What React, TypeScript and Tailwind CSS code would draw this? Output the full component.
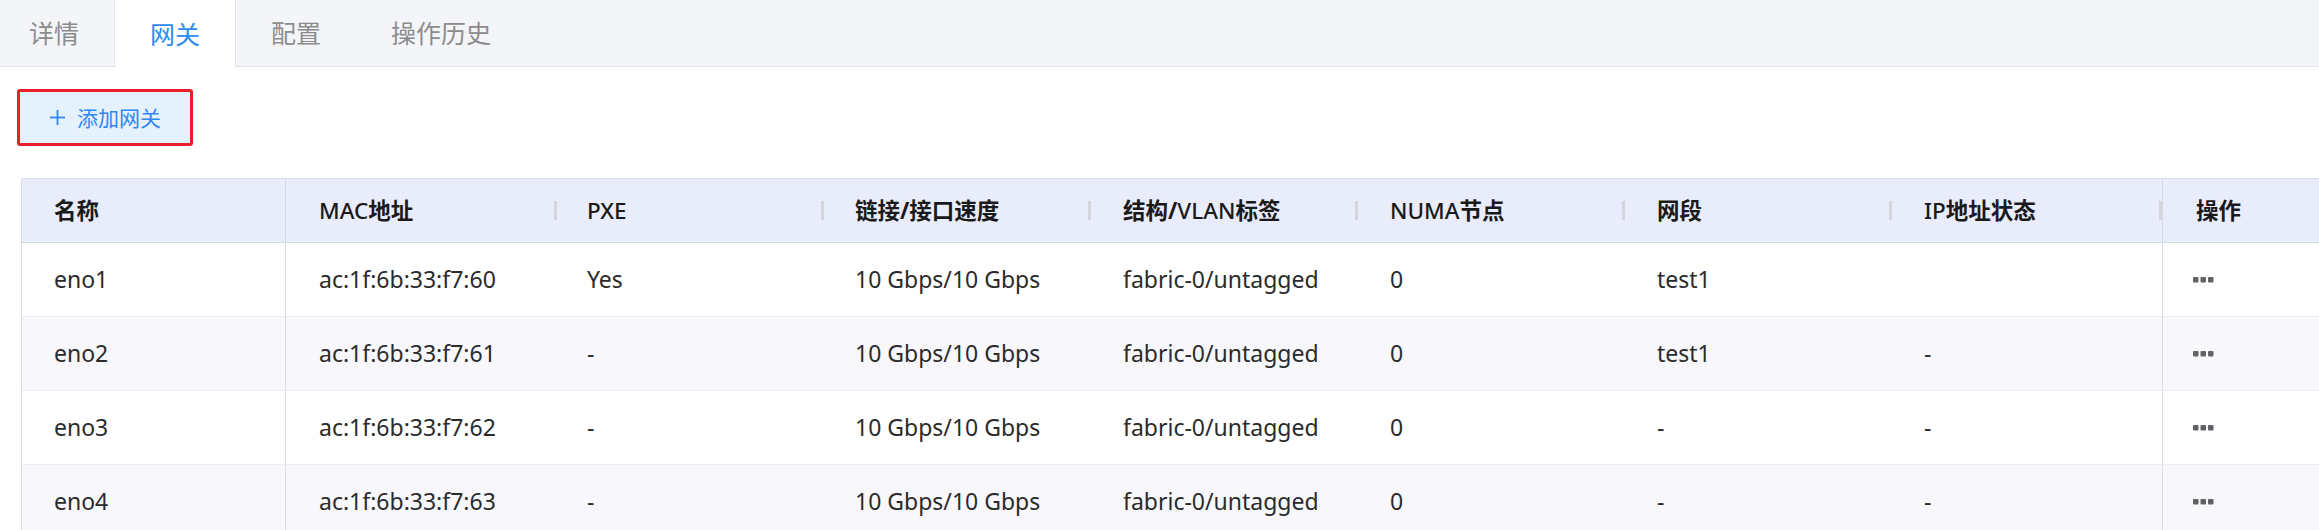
import React from "react";

const FONT = { fontFamily: '"Noto Sans", "Noto Sans CJK SC", sans-serif' };

type Row = string[];

const rows: Row[] = [
  ["eno1", "ac:1f:6b:33:f7:60", "Yes", "10 Gbps/10 Gbps", "fabric-0/untagged", "0", "test1", ""],
  ["eno2", "ac:1f:6b:33:f7:61", "-", "10 Gbps/10 Gbps", "fabric-0/untagged", "0", "test1", "-"],
  ["eno3", "ac:1f:6b:33:f7:62", "-", "10 Gbps/10 Gbps", "fabric-0/untagged", "0", "-", "-"],
  ["eno4", "ac:1f:6b:33:f7:63", "-", "10 Gbps/10 Gbps", "fabric-0/untagged", "0", "-", "-"],
];

const headers = ["MAC地址", "PXE", "链接/接口速度", "结构/VLAN标签", "NUMA节点", "网段", "IP地址状态"];
const widths = ["w-[271px]", "w-[267px]", "w-[267px]", "w-[267px]", "w-[267px]", "w-[267px]", "w-[270px]"];
const pads = ["pl-[33px]", "pl-[30px]", "pl-[31px]", "pl-[32px]", "pl-[32px]", "pl-[32px]", "pl-[32px]"];

function Label({ text }: { text: string }) {
  const parts = text.split(/([\u4e00-\u9fff/]+)/).filter((p) => p.length > 0);
  return (
    <span>
      {parts.map((p, i) =>
        /[\u4e00-\u9fff/]/.test(p) ? (
          <span key={i} className="font-bold">
            {p}
          </span>
        ) : (
          <span key={i} className="font-medium">
            {p}
          </span>
        )
      )}
    </span>
  );
}

function Dots() {
  return (
    <svg width="21" height="6" viewBox="0 0 21 6">
      <rect x="0" y="0" width="5.5" height="5.5" rx="1" fill="#5f6266" />
      <rect x="7.5" y="0" width="5.5" height="5.5" rx="1" fill="#5f6266" />
      <rect x="15" y="0" width="5.5" height="5.5" rx="1" fill="#5f6266" />
    </svg>
  );
}

export default function App() {
  return (
    <div className="w-[2319px] h-[530px] overflow-hidden bg-white" style={FONT}>
      {/* Tabs */}
      <div className="flex h-[67px] bg-[#f4f5f9] text-[25px]" style={{ fontFamily: '"Noto Sans CJK SC", sans-serif' }}>
        <div className="w-[115px] flex items-center pl-[29px] border-r border-b border-[#dfe3ea] text-[#8c8c8c]">详情</div>
        <div className="w-[121px] flex items-center justify-center bg-white border-r border-[#dfe3ea] text-[#2d8cf0]">网关</div>
        <div className="flex items-center px-[35px] border-b border-[#dfe3ea] text-[#8c8c8c]">配置</div>
        <div className="flex items-center px-[35px] border-b border-[#dfe3ea] text-[#8c8c8c]">操作历史</div>
        <div className="flex-1 border-b border-[#dfe3ea]" />
      </div>

      {/* Button */}
      <div className="pt-[22px] pl-[17px]">
        <div className="inline-flex border-[3px] border-[#e8202a] rounded-[3px]">
          <button
            className="flex items-center gap-[11px] h-[51px] w-[170px] justify-center bg-[#e6f1fe] text-[#2f86f6] text-[21px]"
            style={{ fontFamily: '"Noto Sans CJK SC", sans-serif' }}
          >
            <svg width="17" height="17" viewBox="0 0 17 17">
              <line x1="8.5" y1="1" x2="8.5" y2="16" stroke="#2f86f6" strokeWidth="1.8" />
              <line x1="1" y1="8.5" x2="16" y2="8.5" stroke="#2f86f6" strokeWidth="1.8" />
            </svg>
            <span>添加网关</span>
          </button>
        </div>
      </div>

      {/* Table */}
      <div className="mt-[32px] ml-[21px] border-l border-t border-[#d9dde5] text-[23px]">
        {/* header */}
        <div className="flex h-[64px] bg-[#e8ecfb] border-b border-[#d5d9e3] text-[22.5px] text-[#1a1a1a]">
          <div className="w-[264px] shrink-0 flex items-center pl-[32px] border-r border-[#d5d9e3]">
            <Label text="名称" />
          </div>
          {headers.map((h, i) => (
            <div key={h} className={`${widths[i]} ${pads[i]} shrink-0 flex items-center justify-between`}>
              <Label text={h} />
              <span className="w-[3px] h-[19px] bg-[#d3d6dc]" />
            </div>
          ))}
          <div className="flex-1 flex items-center pl-[33px] border-l border-[#d5d9e3]">
            <Label text="操作" />
          </div>
        </div>
        {rows.map((r, ri) => (
          <div
            key={ri}
            className={`flex h-[74px] border-b border-[#eceef4] text-[#2b2b2b] ${ri % 2 === 1 ? "bg-[#f8f8fc]" : "bg-white"}`}
          >
            <div className="w-[264px] shrink-0 flex items-center pl-[32px] border-r border-[#d9dde5]">{r[0]}</div>
            {r.slice(1).map((c, ci) => (
              <div key={ci} className={`${widths[ci]} ${pads[ci]} shrink-0 flex items-center`}>
                {c}
              </div>
            ))}
            <div className="flex-1 flex items-center pl-[30px] border-l border-[#d9dde5]">
              <Dots />
            </div>
          </div>
        ))}
      </div>
    </div>
  );
}
